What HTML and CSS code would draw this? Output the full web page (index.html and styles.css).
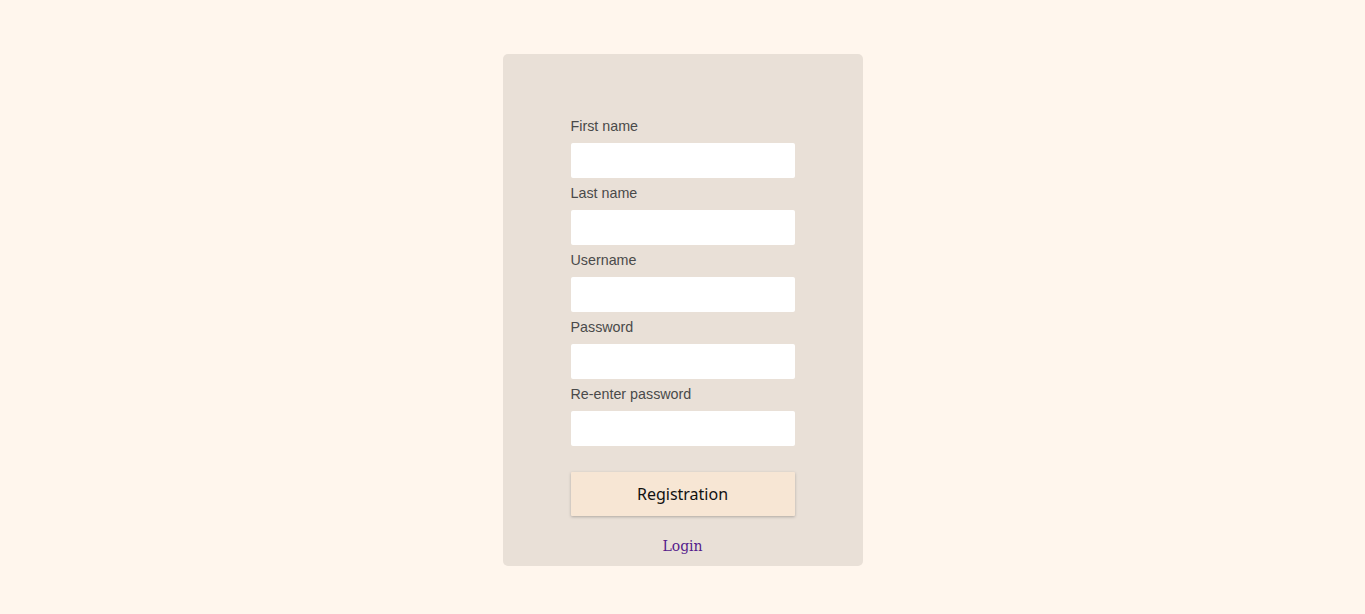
FILE: index.html
```html
<!DOCTYPE html>
<html lang="en">
<head>
<meta charset="utf-8">
<title>Registration</title>
<link rel="stylesheet" href="styles.css">
</head>
<body>
<main class="page">
  <form class="card">
    <div class="field">
      <label class="label" for="fn">First name</label>
      <input class="input" id="fn" type="text">
    </div>
    <div class="field">
      <label class="label" for="ln">Last name</label>
      <input class="input" id="ln" type="text">
    </div>
    <div class="field">
      <label class="label" for="un">Username</label>
      <input class="input" id="un" type="text">
    </div>
    <div class="field">
      <label class="label" for="pw">Password</label>
      <input class="input" id="pw" type="password">
    </div>
    <div class="field">
      <label class="label" for="pw2">Re-enter password</label>
      <input class="input" id="pw2" type="password">
    </div>
    <button class="button" type="button">Registration</button>
    <a class="link" href="#">Login</a>
  </form>
</main>
</body>
</html>
```
FILE: styles.css
```css
html, body {
  margin: 0;
  padding: 0;
  background: #fff6ed;
}
.page {
  display: flex;
  justify-content: center;
  padding-top: 54px;
}
.card {
  box-sizing: border-box;
  width: 360px;
  height: 512px;
  background: #e9e0d7;
  border-radius: 5px;
  padding: 64px 68px 0;
  display: flex;
  flex-direction: column;
  align-items: stretch;
}
.field {
  display: flex;
  flex-direction: column;
  margin-bottom: 7px;
}
.label {
  font-family: "Liberation Sans", Arial, sans-serif;
  font-size: 14.3px;
  line-height: 17px;
  color: #4a4a4a;
  margin-bottom: 8px;
}
.input {
  box-sizing: border-box;
  height: 35px;
  border: none;
  border-radius: 2px;
  background: #ffffff;
  margin: 0;
  padding: 0 8px;
}
.button {
  margin-top: 19px;
  height: 44px;
  border: none;
  border-radius: 1px;
  background: #f7e6d4;
  box-shadow: 0 1px 3px rgba(0, 0, 0, 0.25);
  font-family: "Noto Sans", "Open Sans", sans-serif;
  font-size: 16px;
  color: #111;
  cursor: pointer;
}
.link {
  align-self: center;
  margin-top: 21px;
  font-family: "DejaVu Serif", serif;
  font-size: 14px;
  line-height: 18px;
  color: #551a8b;
  text-decoration: none;
}
```
